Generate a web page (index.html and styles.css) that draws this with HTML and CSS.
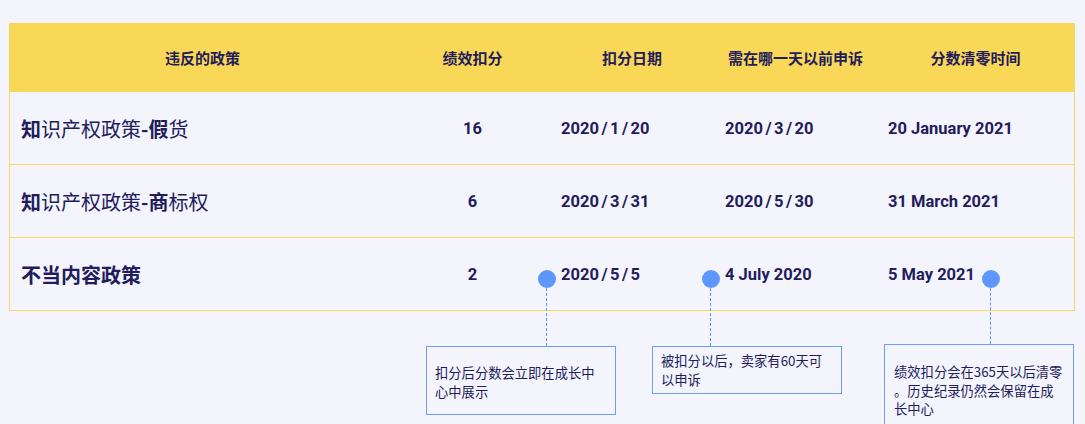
FILE: index.html
```html
<!DOCTYPE html>
<html lang="zh-CN">
<head>
<meta charset="utf-8">
<title>违反的政策</title>
<link rel="stylesheet" href="styles.css">
</head>
<body>
<div class="page">
  <div class="table">
    <div class="row head">
      <div class="cell">违反的政策</div>
      <div class="cell">绩效扣分</div>
      <div class="cell">扣分日期</div>
      <div class="cell">需在哪一天以前申诉</div>
      <div class="cell">分数清零时间</div>
    </div>
    <div class="row">
      <div class="cell policy"><b>知</b>识产权政策<b>-假</b>货</div>
      <div class="cell num">16</div>
      <div class="cell date">2020<span class="sl">/</span>1<span class="sl">/</span>20</div>
      <div class="cell date">2020<span class="sl">/</span>3<span class="sl">/</span>20</div>
      <div class="cell date">20 January 2021</div>
    </div>
    <div class="row">
      <div class="cell policy"><b>知</b>识产权政策<b>-商</b>标权</div>
      <div class="cell num">6</div>
      <div class="cell date">2020<span class="sl">/</span>3<span class="sl">/</span>31</div>
      <div class="cell date">2020<span class="sl">/</span>5<span class="sl">/</span>30</div>
      <div class="cell date">31 March 2021</div>
    </div>
    <div class="row">
      <div class="cell policy bold">不当内容政策</div>
      <div class="cell num">2</div>
      <div class="cell date">
        <span class="pin pin-1"><span class="note note-1">扣分后分数会立即在成长中心中展示</span></span>
        2020<span class="sl">/</span>5<span class="sl">/</span>5
      </div>
      <div class="cell date">
        <span class="pin pin-2"><span class="note note-2">被扣分以后，卖家有60天可以申诉</span></span>
        4 July 2020
      </div>
      <div class="cell date">
        5 May 2021
        <span class="pin pin-3"><span class="note note-3">绩效扣分会在365天以后清零。历史纪录仍然会保留在成长中心</span></span>
      </div>
    </div>
  </div>
</div>
</body>
</html>
```
FILE: styles.css
```css
html, body {
  margin: 0;
  padding: 0;
  background: #f3f4fc;
}

body {
  color: #221c5c;
  font-family: Roboto, "Noto Sans CJK SC", sans-serif;
}

.page {
  padding: 23px 0 0 9px;
  min-height: 424px;
  box-sizing: border-box;
}

.table {
  width: 1064px;
  border-left: 1px solid #f8d765;
  border-right: 1px solid #f8d765;
}

.row {
  display: grid;
  grid-template-columns: 385px 155px 164px 163px 197px;
  height: 73px;
  border-bottom: 1px solid #f8d765;
  box-sizing: border-box;
}

.row.head {
  height: 69px;
  background: #fad857;
  border-bottom: 0;
}

.cell {
  position: relative;
  display: flex;
  align-items: center;
  padding: 0 11px;
  white-space: nowrap;
}

.head .cell {
  justify-content: center;
  font-family: "Noto Sans CJK SC", sans-serif;
  font-weight: 700;
  font-size: 15px;
}

.policy {
  font-family: "Noto Sans CJK SC", sans-serif;
  font-size: 20px;
  font-weight: 400;
}

.policy b,
.policy.bold {
  font-weight: 700;
}

.num {
  justify-content: center;
  font-size: 16.5px;
  font-weight: 700;
}

.date {
  font-size: 16.5px;
  font-weight: 700;
}

.sl {
  padding: 0 2.5px;
}

.pin {
  position: absolute;
  top: 32px;
  width: 18px;
  height: 18px;
  border-radius: 50%;
  background: #5e97fb;
  z-index: 2;
}

.pin::after {
  content: "";
  position: absolute;
  left: 8px;
  top: 18px;
  height: 58px;
  border-left: 1px dashed #5e97fb;
}

.pin-1 { left: -12px; }
.pin-2 { left: -12px; }
.pin-3 { left: 105px; }
.pin-3::after { height: 56px; }

.note {
  position: absolute;
  width: 190px;
  box-sizing: border-box;
  border: 1px solid #6a9ef9;
  background: #f3f4fc;
  font-family: "Noto Sans CJK SC", sans-serif;
  font-size: 13.3px;
  font-weight: 400;
  line-height: 19px;
  color: #221c5c;
  white-space: normal;
  line-break: anywhere;
}

.note-1 {
  left: -112px;
  top: 76px;
  padding: 16px 9px 13px 8px;
}

.note-2 {
  left: -50px;
  top: 76px;
  padding: 4px 9px 4px 8px;
}

.note-3 {
  left: -98px;
  top: 74px;
  padding: 18px 9px 18px 9px;
  line-height: 18.5px;
}
```
